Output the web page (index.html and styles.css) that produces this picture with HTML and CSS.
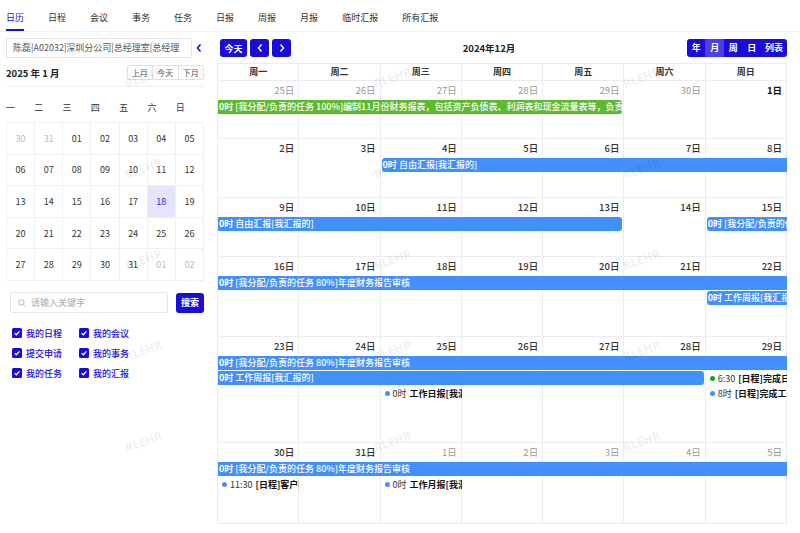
FILE: index.html
```html
<!DOCTYPE html>
<html lang="zh-CN">
<head>
    <meta charset="UTF-8">
    <meta name="viewport" content="width=device-width, initial-scale=1.0">
    <title>日历</title>
    <link rel="stylesheet" href="styles.css">
</head>
<body>
    <div class="tabs">
        <span class="tab active">日历</span>
        <span class="tab">日程</span>
        <span class="tab">会议</span>
        <span class="tab">事务</span>
        <span class="tab">任务</span>
        <span class="tab">日报</span>
        <span class="tab">周报</span>
        <span class="tab">月报</span>
        <span class="tab">临时汇报</span>
        <span class="tab">所有汇报</span>
    </div>

    <div class="main">
        <!-- left side: user, mini calendar, filters -->
        <div class="side">
            <div class="who-row">
                <div class="who">陈磊|A02032|深圳分公司|总经理室|总经理</div>
                <svg class="collapse" width="8" height="10" viewBox="0 0 8 10"><path d="M5.5 1.5 L2.5 5 L5.5 8.5" fill="none" stroke="#1a0dd9" stroke-width="1.6"/></svg>
            </div>
            <div class="month-bar">
                <span class="month-title">2025 年 1 月</span>
                <div class="small-btns">
                    <span>上月</span><span>今天</span><span>下月</span>
                </div>
            </div>
            <div class="mini-head">
                <span>一</span><span>二</span><span>三</span><span>四</span><span>五</span><span>六</span><span>日</span>
            </div>
            <div class="mini-grid">
                <span class="other">30</span><span class="other">31</span><span>01</span><span>02</span><span>03</span><span>04</span><span>05</span>
                <span>06</span><span>07</span><span>08</span><span>09</span><span>10</span><span>11</span><span>12</span>
                <span>13</span><span>14</span><span>15</span><span>16</span><span>17</span><span class="picked">18</span><span>19</span>
                <span>20</span><span>21</span><span>22</span><span>23</span><span>24</span><span>25</span><span>26</span>
                <span>27</span><span>28</span><span>29</span><span>30</span><span>31</span><span class="other">01</span><span class="other">02</span>
            </div>
            <div class="search-row">
                <div class="search-box">
                    <svg width="8" height="8" viewBox="0 0 8 8"><circle cx="3.4" cy="3.4" r="2.7" fill="none" stroke="#aaa" stroke-width="0.9"/><path d="M5.4 5.4 L7.4 7.4" stroke="#aaa" stroke-width="0.9"/></svg>
                    <span class="placeholder">请输入关键字</span>
                </div>
                <button class="search-btn">搜索</button>
            </div>
            <div class="filters">
                <label class="chk"><span class="box"><svg width="10" height="10" viewBox="0 0 10 10"><path d="M2.6 5.1 L4.3 6.8 L7.5 3.4" fill="none" stroke="#fff" stroke-width="1.3"/></svg></span>我的日程</label>
                <label class="chk"><span class="box"><svg width="10" height="10" viewBox="0 0 10 10"><path d="M2.6 5.1 L4.3 6.8 L7.5 3.4" fill="none" stroke="#fff" stroke-width="1.3"/></svg></span>我的会议</label>
                <label class="chk"><span class="box"><svg width="10" height="10" viewBox="0 0 10 10"><path d="M2.6 5.1 L4.3 6.8 L7.5 3.4" fill="none" stroke="#fff" stroke-width="1.3"/></svg></span>提交申请</label>
                <label class="chk"><span class="box"><svg width="10" height="10" viewBox="0 0 10 10"><path d="M2.6 5.1 L4.3 6.8 L7.5 3.4" fill="none" stroke="#fff" stroke-width="1.3"/></svg></span>我的事务</label>
                <label class="chk"><span class="box"><svg width="10" height="10" viewBox="0 0 10 10"><path d="M2.6 5.1 L4.3 6.8 L7.5 3.4" fill="none" stroke="#fff" stroke-width="1.3"/></svg></span>我的任务</label>
                <label class="chk"><span class="box"><svg width="10" height="10" viewBox="0 0 10 10"><path d="M2.6 5.1 L4.3 6.8 L7.5 3.4" fill="none" stroke="#fff" stroke-width="1.3"/></svg></span>我的汇报</label>
            </div>
        </div>

        <!-- month calendar -->
        <div class="cal">
            <div class="toolbar">
                <div class="btn-row">
                    <button class="btn today">今天</button>
                    <button class="btn arrow"><svg width="8" height="10" viewBox="0 0 8 10"><path d="M5.5 1.5 L2.5 5 L5.5 8.5" fill="none" stroke="#fff" stroke-width="1.4"/></svg></button>
                    <button class="btn arrow"><svg width="8" height="10" viewBox="0 0 8 10"><path d="M2.5 1.5 L5.5 5 L2.5 8.5" fill="none" stroke="#fff" stroke-width="1.4"/></svg></button>
                </div>
                <div class="cal-title">2024年12月</div>
                <div class="views">
                    <span>年</span><span class="on">月</span><span>周</span><span>日</span><span class="wide">列表</span>
                </div>
            </div>

            <div class="head">
                <span>周一</span><span>周二</span><span>周三</span><span>周四</span><span>周五</span><span>周六</span><span>周日</span>
            </div>

            <div class="week h58">
                <div class="day other"><span class="num">25日</span></div>
                <div class="day other"><span class="num">26日</span></div>
                <div class="day other"><span class="num">27日</span></div>
                <div class="day other"><span class="num">28日</span></div>
                <div class="day other"><span class="num">29日</span></div>
                <div class="day other"><span class="num">30日</span></div>
                <div class="day"><span class="num strong">1日</span></div>
                <div class="ev green r2 c1 s5 end"><b>0时</b> [我分配/负责的任务 100%]编制11月份财务报表，包括资产负债表、利润表和现金流量表等，负责审核财务报表的准确性</div>
            </div>

            <div class="week h59">
                <div class="day"><span class="num">2日</span></div>
                <div class="day"><span class="num">3日</span></div>
                <div class="day"><span class="num">4日</span></div>
                <div class="day"><span class="num">5日</span></div>
                <div class="day"><span class="num">6日</span></div>
                <div class="day"><span class="num">7日</span></div>
                <div class="day"><span class="num">8日</span></div>
                <div class="ev blue r2 c3 s5 start"><b>0时</b> 自由汇报[我汇报的]</div>
            </div>

            <div class="week h59">
                <div class="day"><span class="num">9日</span></div>
                <div class="day"><span class="num">10日</span></div>
                <div class="day"><span class="num">11日</span></div>
                <div class="day"><span class="num">12日</span></div>
                <div class="day"><span class="num">13日</span></div>
                <div class="day"><span class="num">14日</span></div>
                <div class="day"><span class="num">15日</span></div>
                <div class="ev blue r2 c1 s5 end"><b>0时</b> 自由汇报[我汇报的]</div>
                <div class="ev blue r2 c7 s1 start"><b>0时</b> [我分配/负责的任务 80%]年度财务报告审核</div>
            </div>

            <div class="week h80">
                <div class="day"><span class="num">16日</span></div>
                <div class="day"><span class="num">17日</span></div>
                <div class="day"><span class="num">18日</span></div>
                <div class="day"><span class="num">19日</span></div>
                <div class="day"><span class="num">20日</span></div>
                <div class="day"><span class="num">21日</span></div>
                <div class="day"><span class="num">22日</span></div>
                <div class="ev blue r2 c1 s7"><b>0时</b> [我分配/负责的任务 80%]年度财务报告审核</div>
                <div class="ev blue r3 c7 s1 start"><b>0时</b> 工作周报[我汇报的]</div>
            </div>

            <div class="week h106">
                <div class="day"><span class="num">23日</span></div>
                <div class="day"><span class="num">24日</span></div>
                <div class="day"><span class="num">25日</span></div>
                <div class="day"><span class="num">26日</span></div>
                <div class="day"><span class="num">27日</span></div>
                <div class="day"><span class="num">28日</span></div>
                <div class="day"><span class="num">29日</span></div>
                <div class="ev blue r2 c1 s7"><b>0时</b> [我分配/负责的任务 80%]年度财务报告审核</div>
                <div class="ev blue r3 c1 s6 end"><b>0时</b> 工作周报[我汇报的]</div>
                <div class="dot-ev r4 c3"><i class="dot"></i>0时 <b>工作日报[我汇报的]</b></div>
                <div class="dot-ev r3 c7"><i class="dot green-dot"></i>6:30 <b>[日程]完成日报</b></div>
                <div class="dot-ev r4 c7"><i class="dot"></i>8时 <b>[日程]完成工作总结</b></div>
            </div>

            <div class="week h81">
                <div class="day"><span class="num">30日</span></div>
                <div class="day"><span class="num">31日</span></div>
                <div class="day other"><span class="num">1日</span></div>
                <div class="day other"><span class="num">2日</span></div>
                <div class="day other"><span class="num">3日</span></div>
                <div class="day other"><span class="num">4日</span></div>
                <div class="day other"><span class="num">5日</span></div>
                <div class="ev blue r2 c1 s7"><b>0时</b> [我分配/负责的任务 80%]年度财务报告审核</div>
                <div class="dot-ev r3 c1"><i class="dot"></i>11:30 <b>[日程]客户拜访</b></div>
                <div class="dot-ev r3 c3"><i class="dot"></i>0时 <b>工作月报[我汇报的]</b></div>
            </div>
        </div>
    </div>

    <!-- watermark layer -->
    <div class="watermark">
        <span>RLEHR</span><span>RLEHR</span><span>RLEHR</span>
        <span>RLEHR</span><span>RLEHR</span><span>RLEHR</span>
        <span>RLEHR</span><span>RLEHR</span><span>RLEHR</span>
        <span>RLEHR</span><span>RLEHR</span><span>RLEHR</span>
        <span>RLEHR</span><span>RLEHR</span><span>RLEHR</span>
    </div>
</body>
</html>
```

FILE: styles.css
```css
/* page */
body {
    margin: 0;
    background: #fff;
    font-family: "Noto Sans CJK SC", "Noto Sans", sans-serif;
    font-size: 9px;
    color: #333;
}

/* top tabs */
.tabs {
    display: flex;
    gap: 24px;
    padding-left: 6px;
    border-bottom: 1px solid #f0f0f0;
}

.tab {
    padding: 12px 0 5px;
    line-height: 12px;
    border-bottom: 2px solid transparent;
    color: #333;
}

.tab.active {
    color: #1a0dd9;
    border-bottom-color: #1a0dd9;
}

.main {
    display: flex;
    gap: 13px;
    padding: 6px 13px 0 6px;
}

/* left side */
.side {
    width: 198px;
    flex-shrink: 0;
}

.who-row {
    display: flex;
    align-items: center;
    height: 20px;
}

.who {
    width: 186px;
    height: 20px;
    box-sizing: border-box;
    border: 1px solid #e3e3e3;
    border-radius: 2px;
    padding-left: 6px;
    line-height: 18px;
    color: #555;
    white-space: nowrap;
    overflow: hidden;
}

.collapse {
    margin-left: 3px;
}

.month-bar {
    display: flex;
    justify-content: space-between;
    align-items: center;
    margin-top: 7px;
    padding-bottom: 6px;
    border-bottom: 1px solid #eee;
}

.month-title {
    font-size: 9.5px;
    font-weight: 700;
    color: #222;
    line-height: 14px;
}

.small-btns {
    display: flex;
    border: 1px solid #e0e0e0;
    border-radius: 2px;
}

.small-btns span {
    width: 24.5px;
    text-align: center;
    font-size: 8px;
    line-height: 13px;
    color: #555;
}

.small-btns span + span {
    border-left: 1px solid #e0e0e0;
}

.mini-head {
    display: grid;
    grid-template-columns: repeat(7, 1fr);
    margin: 15px 0 8px;
    line-height: 12px;
    font-size: 9px;
    color: #333;
}

.mini-grid {
    display: grid;
    grid-template-columns: repeat(7, 1fr);
    grid-template-rows: repeat(5, 1fr);
    height: 158px;
    border-top: 1px solid #efeff6;
    border-left: 1px solid #efeff6;
}

.mini-grid span {
    display: flex;
    align-items: center;
    justify-content: center;
    border-right: 1px solid #efeff6;
    border-bottom: 1px solid #efeff6;
    font-size: 9px;
    color: #333;
}

.mini-grid .other {
    color: #bbb;
}

.mini-grid .picked {
    background: #e5e4fb;
    color: #2a1de0;
}

.search-row {
    display: flex;
    align-items: center;
    margin-top: 11px;
    padding-left: 4px;
}

.search-box {
    display: flex;
    align-items: center;
    width: 158px;
    height: 21px;
    box-sizing: border-box;
    border: 1px solid #e6e6e6;
    border-radius: 2px;
    padding-left: 7px;
}

.placeholder {
    margin-left: 5px;
    color: #aaa;
}

.search-btn {
    margin-left: 8px;
    width: 28px;
    height: 20px;
    padding: 0;
    border: none;
    border-radius: 3px;
    background: #1a0dd9;
    color: #fff;
    font-family: inherit;
    font-size: 9px;
    font-weight: 700;
}

.filters {
    display: grid;
    grid-template-columns: 67px 67px;
    grid-auto-rows: 20px;
    margin-top: 10px;
    padding-left: 6px;
}

.chk {
    display: flex;
    align-items: center;
    color: #1a0dd9;
    font-weight: 500;
}

.box {
    width: 10px;
    height: 10px;
    border-radius: 1.5px;
    background: #1a0dd9;
    margin-right: 4px;
    display: flex;
}

/* month calendar */
.cal {
    flex: 1;
    min-width: 0;
}

.toolbar {
    display: flex;
    justify-content: space-between;
    align-items: center;
    height: 18px;
    margin: 1px 0 6px;
    padding-left: 3px;
}

.btn-row {
    display: flex;
    gap: 3px;
}

.btn {
    height: 18px;
    padding: 0;
    border: none;
    border-radius: 3px;
    background: #1a0dd9;
    color: #fff;
    font-family: inherit;
    font-size: 9px;
    font-weight: 700;
    display: flex;
    align-items: center;
    justify-content: center;
}

.btn.today {
    width: 27px;
}

.btn.arrow {
    width: 19px;
}

.cal-title {
    font-size: 9.5px;
    font-weight: 700;
    color: #222;
}

.views {
    display: flex;
    background: #1a0dd9;
    border-radius: 3px;
    overflow: hidden;
    height: 18px;
}

.views span {
    width: 18.5px;
    line-height: 18px;
    text-align: center;
    color: #fff;
    font-weight: 700;
}

.views span.wide {
    width: 26px;
}

.views span.on {
    background: #4d40ea;
}

.head {
    display: grid;
    grid-template-columns: repeat(7, minmax(0, 1fr));
    border-top: 1px solid #ececf0;
    border-left: 1px solid #ececf0;
}

.head span {
    height: 16px;
    line-height: 16px;
    text-align: center;
    font-weight: 600;
    color: #333;
    border-right: 1px solid #ececf0;
    border-bottom: 1px solid #ececf0;
}

.week {
    display: grid;
    grid-template-columns: repeat(7, minmax(0, 1fr));
    grid-template-rows: 19px auto auto auto 1fr;
    border-left: 1px solid #ececf0;
    box-sizing: border-box;
}

.h58 { height: 58px; }
.h59 { height: 59px; }
.h80 { height: 80px; }
.h106 { height: 106px; }
.h81 { height: 81px; }

.day {
    grid-row: 1 / 6;
    border-right: 1px solid #ececf0;
    border-bottom: 1px solid #ececf0;
    text-align: right;
    padding: 2px 4px 0 0;
}

.day:nth-child(1) { grid-column: 1; }
.day:nth-child(2) { grid-column: 2; }
.day:nth-child(3) { grid-column: 3; }
.day:nth-child(4) { grid-column: 4; }
.day:nth-child(5) { grid-column: 5; }
.day:nth-child(6) { grid-column: 6; }
.day:nth-child(7) { grid-column: 7; }

.num {
    font-size: 9.5px;
    line-height: 14px;
    font-weight: 500;
    color: #333;
}

.num.strong {
    font-weight: 700;
    color: #111;
}

.day.other .num {
    color: #999;
    font-weight: 400;
}

/* events */
.ev {
    height: 14px;
    line-height: 14px;
    margin-bottom: 1px;
    padding-left: 1px;
    color: #fff;
    font-weight: 500;
    white-space: nowrap;
    overflow: hidden;
}

.ev b {
    font-weight: 700;
}

.ev.blue {
    background: #4290fb;
}

.ev.green {
    background: #5cba2e;
}

.ev.end {
    margin-right: 2px;
    border-radius: 0 3px 3px 0;
}

.ev.start {
    margin-left: 1px;
    border-radius: 3px 0 0 3px;
}

.dot-ev {
    display: flex;
    align-items: center;
    height: 15px;
    padding-left: 4px;
    white-space: nowrap;
    overflow: hidden;
    color: #333;
}

.dot-ev b {
    margin-left: 3px;
    font-weight: 700;
    color: #111;
}

.dot {
    width: 5px;
    height: 5px;
    border-radius: 50%;
    background: #4290fb;
    margin-right: 3px;
    flex-shrink: 0;
}

.dot.green-dot {
    background: #1f9d1f;
}

.r2 { grid-row: 2; }
.r3 { grid-row: 3; }
.r4 { grid-row: 4; }

.c1 { grid-column-start: 1; }
.c3 { grid-column-start: 3; }
.c7 { grid-column-start: 7; }

.s1 { grid-column-end: span 1; }
.s5 { grid-column-end: span 5; }
.s6 { grid-column-end: span 6; }
.s7 { grid-column-end: span 7; }

/* watermark */
.watermark {
    position: fixed;
    top: 0;
    left: 0;
    display: grid;
    grid-template-columns: repeat(3, 249px);
    grid-auto-rows: 91px;
    padding: 32px 0 0 19px;
    pointer-events: none;
}

.watermark span {
    display: flex;
    align-items: center;
    justify-content: center;
    transform: rotate(-20deg);
    font-family: "Noto Sans", sans-serif;
    font-size: 12px;
    font-weight: 700;
    color: rgba(0, 0, 0, 0.06);
}
```
